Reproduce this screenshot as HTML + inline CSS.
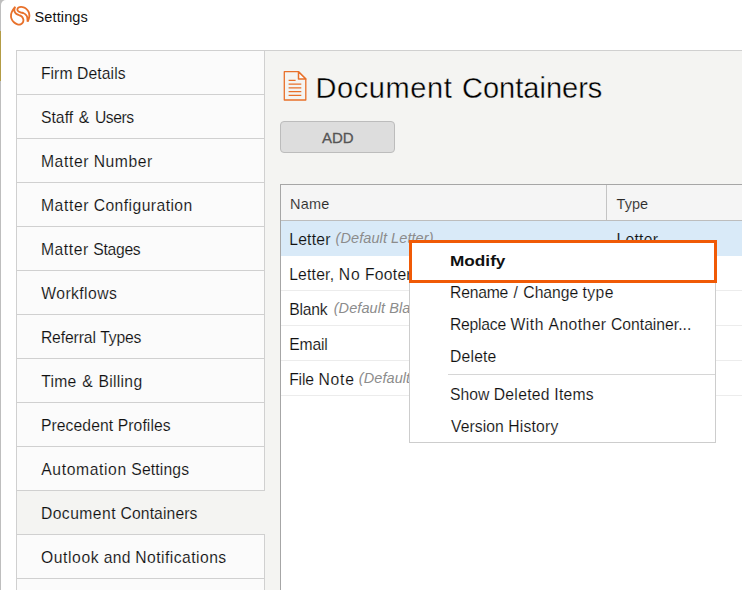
<!DOCTYPE html>
<html lang="en">
<head>
<meta charset="utf-8">
<title>Settings</title>
<style>
  html, body { margin: 0; padding: 0; }
  body { width: 742px; height: 590px; overflow: hidden; position: relative; background: #ffffff;
         font-family: "Liberation Sans", sans-serif; color: #1a1a1a; }
  .abs { position: absolute; }
  .t { position: absolute; white-space: nowrap; line-height: 1; margin: 0; font-weight: normal; }
  .t span { position: absolute; top: 0; }
  /* desktop / window edge visible at far left */
  #edge-bg { left: 0; top: 0; width: 6px; height: 590px; background: #bebebe; }
  #edge-yellow { left: 0; top: 31px; width: 1px; height: 50px; background: #b39c45; }
  #win { left: 1px; top: 0; width: 741px; height: 590px; background: #fff; border-top-left-radius: 5px; }
  /* sidebar */
  #side { left: 16px; top: 50px; width: 249px; height: 540px; background: #fbfbfb; border-left: 1px solid #d0d0d0; border-top: 1px solid #d0d0d0; box-sizing: border-box; }
  .item { position: absolute; left: 0; width: 248px; height: 44px; box-sizing: border-box; border-bottom: 1px solid #d0d0d0; border-right: 1px solid #d0d0d0; background: #fbfbfb; }
  .item.sel { background: #f4f4f2; border-right: none; }
  /* content panel */
  #content { left: 265px; top: 50px; width: 477px; height: 540px; background: #f4f4f2; border-top: 1px solid #d0d0d0; box-sizing: border-box; }
  #h1 { font-size: 29px; color: #000; -webkit-text-stroke: 0.35px #f4f4f2; }
  #add { left: 280px; top: 121px; width: 115px; height: 32px; box-sizing: border-box; border: 1px solid #bcbcbc; border-radius: 4px; background: #dddddd; }
  /* table */
  #tbl { left: 280px; top: 184px; width: 462px; height: 406px; background: #fff; border-left: 1px solid #a6a6a6; border-top: 1px solid #a6a6a6; box-sizing: border-box; }
  #thead { left: 0; top: 0; width: 461px; height: 36px; background: #f5f5f5; border-bottom: 1px solid #bdbdbd; box-sizing: border-box; }
  #colsep { left: 325px; top: 0; width: 1px; height: 35px; background: #c4c4c4; }
  .row { position: absolute; left: 0; width: 461px; height: 35px; box-sizing: border-box; border-bottom: 1px solid #ececec; background: #fff; }
  .row.sel { background: #d9eaf8; border-bottom-color: #d9eaf8; }
  /* context menu */
  #menu { left: 409px; top: 240px; width: 307px; height: 203px; box-sizing: border-box; background: #fff; border: 1px solid #cdcdcd; }
  #hl { left: -1px; top: -1px; width: 308px; height: 43px; box-sizing: border-box; border: 3px solid #f05a06; background: #fff; }
  #msep { left: 38px; top: 133px; width: 267px; height: 1px; background: #d6d6d6; }
</style>
</head>
<body>
  <div class="abs" id="edge-bg"></div>
  <div class="abs" id="edge-yellow"></div>
  <div class="abs" id="win"></div>

  <!-- title bar -->
  <svg class="abs" style="left:0;top:0" width="40" height="32" viewBox="0 0 40 32">
    <g fill="none" stroke="#e8712b" stroke-width="1.85" stroke-linejoin="miter" stroke-miterlimit="2.2">
      <path d="M15.13 6.85 C14.71 7.44 13.29 9.13 12.61 10.38 C11.94 11.63 11.25 12.95 11.07 14.35 C10.89 15.74 11.03 17.43 11.51 18.76 C11.99 20.08 12.94 21.36 13.94 22.28 C14.93 23.20 16.44 23.90 17.46 24.27 C18.49 24.64 19.30 24.67 20.11 24.49 C20.92 24.30 21.76 23.83 22.31 23.17 C22.87 22.50 23.31 21.33 23.42 20.52 C23.53 19.71 23.31 19.01 22.98 18.31 C22.65 17.62 22.13 16.88 21.43 16.33 C20.73 15.78 19.67 15.45 18.79 15.01 C17.91 14.57 16.84 14.24 16.14 13.69 C15.44 13.13 14.89 12.40 14.60 11.70 C14.30 11.00 14.29 10.30 14.38 9.50 C14.47 8.69 15.00 7.29 15.13 6.85Z"/>
      <path d="M27.61 21.71 C27.83 21.14 28.64 19.40 28.93 18.31 C29.22 17.23 29.44 16.33 29.37 15.23 C29.30 14.13 29.00 12.77 28.49 11.70 C27.97 10.64 27.09 9.57 26.28 8.83 C25.48 8.10 24.52 7.62 23.64 7.29 C22.76 6.96 21.84 6.81 20.99 6.85 C20.15 6.89 19.17 7.11 18.57 7.51 C17.96 7.92 17.45 8.69 17.38 9.28 C17.30 9.86 17.60 10.52 18.13 11.04 C18.66 11.55 19.63 11.99 20.55 12.36 C21.47 12.73 22.76 12.84 23.64 13.24 C24.52 13.65 25.25 14.16 25.84 14.79 C26.43 15.41 26.87 15.84 27.17 16.99 C27.46 18.15 27.53 20.92 27.61 21.71Z"/>
    </g>
  </svg>
  <div class="t" style="left:34.6px;top:10px;font-size:14.5px;color:#111;letter-spacing:0.109px;">Settings</div>

  <!-- sidebar navigation -->
  <div class="abs" id="side">
    <div class="item" style="top:0px"><div class="t" style="left:23.9px;top:15px;font-size:15.7px;color:#111;-webkit-text-stroke:0.12px #fbfbfb;"><span style="left:0px;letter-spacing:0.07px">Firm</span> <span style="left:36.13px;letter-spacing:0.103px">Details</span></div></div>
    <div class="item" style="top:44px"><div class="t" style="left:23.9px;top:15px;font-size:15.7px;color:#111;-webkit-text-stroke:0.12px #fbfbfb;"><span style="left:0px;letter-spacing:0.066px">Staff</span> <span style="left:37.95px;letter-spacing:0px">&amp;</span> <span style="left:54.06px;letter-spacing:-0.434px">Users</span></div></div>
    <div class="item" style="top:88px"><div class="t" style="left:23.9px;top:15px;font-size:15.7px;color:#111;-webkit-text-stroke:0.12px #fbfbfb;"><span style="left:0px;letter-spacing:0.633px">Matter</span> <span style="left:52.74px;letter-spacing:0.585px">Number</span></div></div>
    <div class="item" style="top:132px"><div class="t" style="left:23.9px;top:15px;font-size:15.7px;color:#111;-webkit-text-stroke:0.12px #fbfbfb;"><span style="left:0px;letter-spacing:0.633px">Matter</span> <span style="left:52.74px;letter-spacing:0.443px">Configuration</span></div></div>
    <div class="item" style="top:176px"><div class="t" style="left:23.9px;top:15px;font-size:15.7px;color:#111;-webkit-text-stroke:0.12px #fbfbfb;"><span style="left:0px;letter-spacing:0.568px">Matter</span> <span style="left:52.32px;letter-spacing:-0.271px">Stages</span></div></div>
    <div class="item" style="top:220px"><div class="t" style="left:24.3px;top:15px;font-size:15.7px;color:#111;-webkit-text-stroke:0.12px #fbfbfb;letter-spacing:0.428px;">Workflows</div></div>
    <div class="item" style="top:264px"><div class="t" style="left:23.9px;top:15px;font-size:15.7px;color:#111;-webkit-text-stroke:0.12px #fbfbfb;"><span style="left:0px;letter-spacing:-0.114px">Referral</span> <span style="left:59.3px;letter-spacing:-0.178px">Types</span></div></div>
    <div class="item" style="top:308px"><div class="t" style="left:24.3px;top:15px;font-size:15.7px;color:#111;-webkit-text-stroke:0.12px #fbfbfb;"><span style="left:0px;letter-spacing:0.203px">Time</span> <span style="left:40.87px;letter-spacing:0px">&amp;</span> <span style="left:57.12px;letter-spacing:0.309px">Billing</span></div></div>
    <div class="item" style="top:352px"><div class="t" style="left:23.9px;top:15px;font-size:15.7px;color:#111;-webkit-text-stroke:0.12px #fbfbfb;"><span style="left:0px;letter-spacing:0.099px">Precedent</span> <span style="left:76.88px;letter-spacing:0.077px">Profiles</span></div></div>
    <div class="item" style="top:396px"><div class="t" style="left:24.3px;top:15px;font-size:15.7px;color:#111;-webkit-text-stroke:0.12px #fbfbfb;"><span style="left:0px;letter-spacing:0.613px">Automation</span> <span style="left:89.97px;letter-spacing:0.164px">Settings</span></div></div>
    <div class="item sel" style="top:440px"><div class="t" style="left:23.9px;top:15px;font-size:15.7px;color:#111;-webkit-text-stroke:0.12px #f4f4f2;"><span style="left:0px;letter-spacing:0.453px">Document</span> <span style="left:79.6px;letter-spacing:0.121px">Containers</span></div></div>
    <div class="item" style="top:484px"><div class="t" style="left:23.9px;top:15px;font-size:15.7px;color:#111;-webkit-text-stroke:0.12px #fbfbfb;"><span style="left:0px;letter-spacing:0.6px">Outlook</span> <span style="left:62.75px;letter-spacing:0.321px">and</span> <span style="left:94.38px;letter-spacing:0.458px">Notifications</span></div></div>
    <div class="item" style="top:528px"></div>
  </div>

  <!-- content panel -->
  <div class="abs" id="content"></div>
  <svg class="abs" style="left:282px;top:69px" width="27" height="34" viewBox="0 0 27 34">
    <g fill="none" stroke="#e8702a" stroke-width="1.3">
      <path d="M2.3 2.7 H16.5 L23.8 10 V31 H2.3 Z" stroke-linejoin="round"/>
      <path d="M16.5 2.7 V10 H23.8 Z" stroke-linejoin="round" fill="#fbfbfb" stroke-width="1.5"/>
      <path d="M6.6 11.4 H13.6 M6.6 15.1 H19.3 M6.6 18.9 H19.3 M6.6 22.6 H19.3 M6.6 26.4 H19.3" stroke-width="1.35"/>
    </g>
  </svg>
  <h1 class="t" id="h1" style="left:315.4px;top:74px;"><span style="left:0;letter-spacing:0.606px">Document</span> <span style="left:146.6px;letter-spacing:0.016px">Containers</span></h1>
  <div class="abs" id="add"><div class="t" style="left:41px;top:8px;font-size:15.4px;color:#555;-webkit-text-stroke:0.3px #555;transform:scaleX(0.9750);transform-origin:0 0;letter-spacing:0px;">ADD</div></div>

  <!-- table -->
  <div class="abs" id="tbl">
    <div class="abs" id="thead"><div class="t" style="left:9px;top:12px;font-size:14.5px;color:#2a2a2a;-webkit-text-stroke:0.12px #f5f5f5;letter-spacing:0.227px;">Name</div><div class="t" style="left:335.5px;top:12px;font-size:14.5px;color:#2a2a2a;-webkit-text-stroke:0.12px #f5f5f5;letter-spacing:0.08px;">Type</div><div class="abs" id="colsep"></div></div>
    <div class="row sel" style="top:36px"><div class="t" style="left:8.2px;top:11px;font-size:15.7px;color:#111;-webkit-text-stroke:0.12px #d9eaf8;letter-spacing:0.232px;">Letter</div><div class="t" style="left:54.6px;top:10px;font-size:14.5px;color:#8c8c8c;font-style:italic;letter-spacing:0.08px;">(Default Letter)</div><div class="t" style="left:335.6px;top:11px;font-size:15.7px;color:#111;-webkit-text-stroke:0.12px #d9eaf8;letter-spacing:0.232px;">Letter</div></div>
    <div class="row" style="top:71px"><div class="t" style="left:8.2px;top:11px;font-size:15.7px;color:#111;-webkit-text-stroke:0.12px #fff;"><span style="left:0px;letter-spacing:0.207px">Letter,</span> <span style="left:49.53px;letter-spacing:0.861px">No</span> <span style="left:75.79px;letter-spacing:0.254px">Footer</span></div></div>
    <div class="row" style="top:106px"><div class="t" style="left:8.2px;top:11px;font-size:15.7px;color:#111;-webkit-text-stroke:0.12px #fff;letter-spacing:-0.217px;">Blank</div><div class="t" style="left:52.7px;top:10px;font-size:14.5px;color:#8c8c8c;font-style:italic;letter-spacing:0.08px;">(Default Blank)</div></div>
    <div class="row" style="top:141px"><div class="t" style="left:8.2px;top:11px;font-size:15.7px;color:#111;-webkit-text-stroke:0.12px #fff;letter-spacing:-0.143px;">Email</div></div>
    <div class="row" style="top:176px"><div class="t" style="left:8.2px;top:11px;font-size:15.7px;color:#111;-webkit-text-stroke:0.12px #fff;"><span style="left:0px;letter-spacing:-0.148px">File</span> <span style="left:29.21px;letter-spacing:0.776px">Note</span></div><div class="t" style="left:77.8px;top:10px;font-size:14.5px;color:#8c8c8c;font-style:italic;letter-spacing:0.08px;">(Default File Note)</div></div>
  </div>

  <!-- context menu -->
  <div class="abs" id="menu">
    <div class="abs" id="hl"><div class="t" style="left:38.1px;top:10px;font-size:15.3px;color:#111;font-weight:bold;transform:scaleX(1.1250);transform-origin:0 0;letter-spacing:0px;">Modify</div></div>
    <div class="t" style="left:40px;top:44px;font-size:15.7px;color:#111;-webkit-text-stroke:0.12px #fff;"><span style="left:0px;letter-spacing:-0.198px">Rename</span> <span style="left:63.55px;letter-spacing:0px">/</span> <span style="left:73.35px;letter-spacing:-0.038px">Change</span> <span style="left:132.52px;letter-spacing:0.431px">type</span></div>
    <div class="t" style="left:40px;top:76px;font-size:15.7px;color:#111;-webkit-text-stroke:0.12px #fff;"><span style="left:0px;letter-spacing:-0.232px">Replace</span> <span style="left:60.38px;letter-spacing:0.587px">With</span> <span style="left:98.56px;letter-spacing:0.432px">Another</span> <span style="left:160.98px;letter-spacing:0.006px">Container...</span></div>
    <div class="t" style="left:40px;top:108px;font-size:15.7px;color:#111;-webkit-text-stroke:0.12px #fff;letter-spacing:0.2px;">Delete</div>
    <div class="abs" id="msep"></div>
    <div class="t" style="left:40px;top:146px;font-size:15.7px;color:#111;-webkit-text-stroke:0.12px #fff;"><span style="left:0px;letter-spacing:-0.003px">Show</span> <span style="left:43.71px;letter-spacing:0.299px">Deleted</span> <span style="left:104.36px;letter-spacing:0.206px">Items</span></div>
    <div class="t" style="left:41px;top:178px;font-size:15.7px;color:#111;-webkit-text-stroke:0.12px #fff;"><span style="left:0px;letter-spacing:0.086px">Version</span> <span style="left:57.31px;letter-spacing:0.186px">History</span></div>
  </div>
</body>
</html>
